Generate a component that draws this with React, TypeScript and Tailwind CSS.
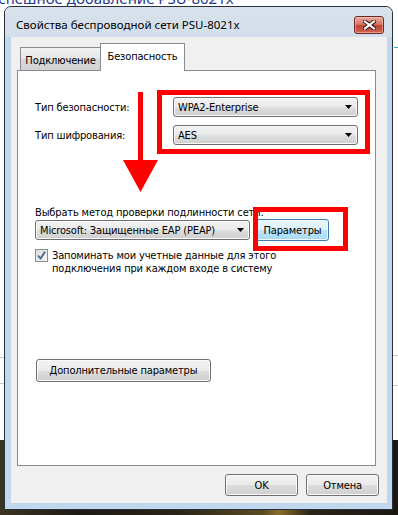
import React from "react";

function DropArrow() {
  return (
    <svg width="7" height="4" viewBox="0 0 7 4" className="shrink-0">
      <path d="M0 0H7L3.5 4Z" fill="#000" />
    </svg>
  );
}

function Combo({ className, text }: { className: string; text: string }) {
  return (
    <div
      className={
        "flex h-[20px] items-center rounded-[3px] border border-[#707070] bg-[linear-gradient(#f2f2f2,#ebebeb_45%,#dddddd_55%,#cfcfcf)] pl-[4px] pr-[5px] shadow-[inset_0_0_0_1px_#fafafa] " +
        className
      }
    >
      <span className="flex-1 whitespace-nowrap">{text}</span>
      <DropArrow />
    </div>
  );
}

const btn =
  "flex items-center justify-center rounded-[3px] border border-[#707070] bg-[linear-gradient(#f2f2f2,#ebebeb_50%,#dddddd_50%,#cfcfcf)] shadow-[inset_0_0_0_1px_#fbfbfb] whitespace-nowrap";

export default function App() {
  return (
    <div className="relative h-[515px] w-[398px] overflow-hidden bg-white font-['DejaVu_Sans_Condensed','Liberation_Sans',sans-serif] text-[11px] leading-[13px] tracking-[-0.15px] text-black">
      {/* desktop behind the window */}
      <div className="absolute left-[-10px] top-[-9px] whitespace-nowrap font-['Noto_Sans',sans-serif] text-[15px] leading-[15px] tracking-normal text-[#1f3a8c]">
        Успешное добавление PSU-8021x
      </div>
      <div className="absolute left-0 top-[357px] h-[1px] w-[5px] bg-[#c8c8c8]" />
      <div className="absolute left-0 top-[383px] h-[1px] w-[5px] bg-[#c8c8c8]" />
      <div className="absolute right-0 top-[355px] h-[1px] w-[6px] bg-[#c8c8c8]" />
      <div className="absolute right-0 top-[385px] h-[1px] w-[6px] bg-[#c8c8c8]" />
      <div className="absolute right-0 top-[47px] h-[1px] w-[4px] bg-[#3aa6d6]" />
      <div className="absolute bottom-0 left-0 right-0 top-[440px] bg-[linear-gradient(90deg,#3b3322,#1d1a14_20%,#2a2418_45%,#5c4b22_66%,#8a6d2a_70%,#2a2418_78%,#1a1712)]" />

      {/* window */}
      <div className="relative z-10 ml-[4px] mt-[6px] flex h-[504px] w-[389px] flex-col rounded-t-[7px] border border-[#27313b] bg-[#c1d7ee]">
        {/* title bar */}
        <div className="flex h-[30px] items-start rounded-t-[6px] bg-[linear-gradient(#d8e1eb,#d3dfec)] pl-[11px] pr-[8px]">
          <span className="mt-[10px] whitespace-nowrap font-['Noto_Sans',sans-serif] text-[11.5px] leading-[15px] tracking-normal text-black">
            Свойства беспроводной сети PSU-8021x
          </span>
          <div className="ml-auto mt-[9px] flex h-[18px] w-[30px] items-center justify-center rounded-[3px] border border-[#6e2a22] bg-[linear-gradient(#e9a99c,#d7796a_45%,#c2412f_55%,#d2675a)] shadow-[inset_0_0_0_1px_rgba(255,220,210,0.45)]">
            <svg width="13" height="10" viewBox="0 0 13 10">
              <path d="M2 1.5L11 8.5M11 1.5L2 8.5" stroke="#3d1511" strokeWidth="4.2" strokeLinecap="square" />
              <path d="M2 1.5L11 8.5M11 1.5L2 8.5" stroke="#ffffff" strokeWidth="2.2" strokeLinecap="square" />
            </svg>
          </div>
        </div>

        {/* client area */}
        <div className="mb-[6px] ml-[6px] mr-[5px] flex flex-1 flex-col bg-[#f0f0f0] pl-[6px] pt-[6px]">
          {/* tabs */}
          <div className="flex h-[27px] items-end pl-[3px]">
            <div className="flex h-[23px] w-[81px] items-center justify-center border border-b-0 border-[#898c95] bg-[linear-gradient(#f2f2f2,#e6e6e6_50%,#d9d9d9_50%,#d2d2d2)] pt-[2px]">
              Подключение
            </div>
            <div className="relative z-10 -mb-[1px] -ml-[1px] flex h-[28px] w-[85px] items-center justify-center border border-b-0 border-[#898c95] bg-white pb-[2px]">
              Безопасность
            </div>
          </div>

          {/* tab page */}
          <div className="flex h-[396px] w-[359px] flex-col border border-[#898c95] bg-white pl-[17px] pt-[26px]">
            <div className="flex h-[20px] items-center">
              <span className="w-[138px]">Тип безопасности:</span>
              <Combo className="w-[185px]" text="WPA2-Enterprise" />
            </div>
            <div className="mt-[8px] flex h-[20px] items-center">
              <span className="w-[138px]">Тип шифрования:</span>
              <Combo className="w-[185px]" text="AES" />
            </div>

            <div className="mt-[61px] whitespace-nowrap">Выбрать метод проверки подлинности сети:</div>
            <div className="flex h-[22px] items-center">
              <Combo className="w-[215px]" text="Microsoft: Защищенные EAP (PEAP)" />
              <div className="ml-[6px] flex h-[22px] w-[73px] items-center justify-center rounded-[3px] border border-[#3c7fb1] bg-[linear-gradient(#eaf6fd,#d9f0fc_50%,#bee6fd_50%,#a7d9f5)] shadow-[inset_0_0_0_1px_#f4fbff]">
                Параметры
              </div>
            </div>

            <div className="mt-[8px] flex items-start">
              <div className="flex h-[13px] w-[13px] shrink-0 items-center justify-center border border-[#8e8f8f] bg-[linear-gradient(135deg,#dcdcdc,#f8f8f8)]">
                <svg width="11" height="11" viewBox="0 0 11 11">
                  <path d="M2 5.5L4.5 8.5L9 1.8" fill="none" stroke="#4a5f94" strokeWidth="1.8" />
                </svg>
              </div>
              <div className="ml-[4px]">
                <div>Запоминать мои учетные данные для этого</div>
                <div>подключения при каждом входе в систему</div>
              </div>
            </div>

            <div className={btn + " ml-[1px] mt-[84px] h-[23px] w-[175px]"}>Дополнительные параметры</div>
          </div>

          {/* dialog buttons */}
          <div className="mt-[8px] flex justify-end gap-[8px] pr-[8px]">
            <div className={btn + " h-[22px] w-[73px]"}>OK</div>
            <div className={btn + " h-[22px] w-[73px]"}>Отмена</div>
          </div>
        </div>
      </div>

      {/* red annotations */}
      <div className="absolute left-[157px] top-[90px] z-20 h-[64px] w-[213px] border-[5px] border-[#ff0000]" />
      <div className="absolute left-[253px] top-[207px] z-20 h-[44px] w-[95px] border-[5px] border-[#ff0000]" />
      <div className="absolute left-[138px] top-[92px] z-20 h-[69px] w-[5px] bg-[#ff0000]" />
      <svg className="absolute left-[123px] top-[160px] z-20" width="35" height="32" viewBox="0 0 35 32">
        <path d="M0 0H35L17.5 32Z" fill="#ff0000" />
      </svg>
    </div>
  );
}
